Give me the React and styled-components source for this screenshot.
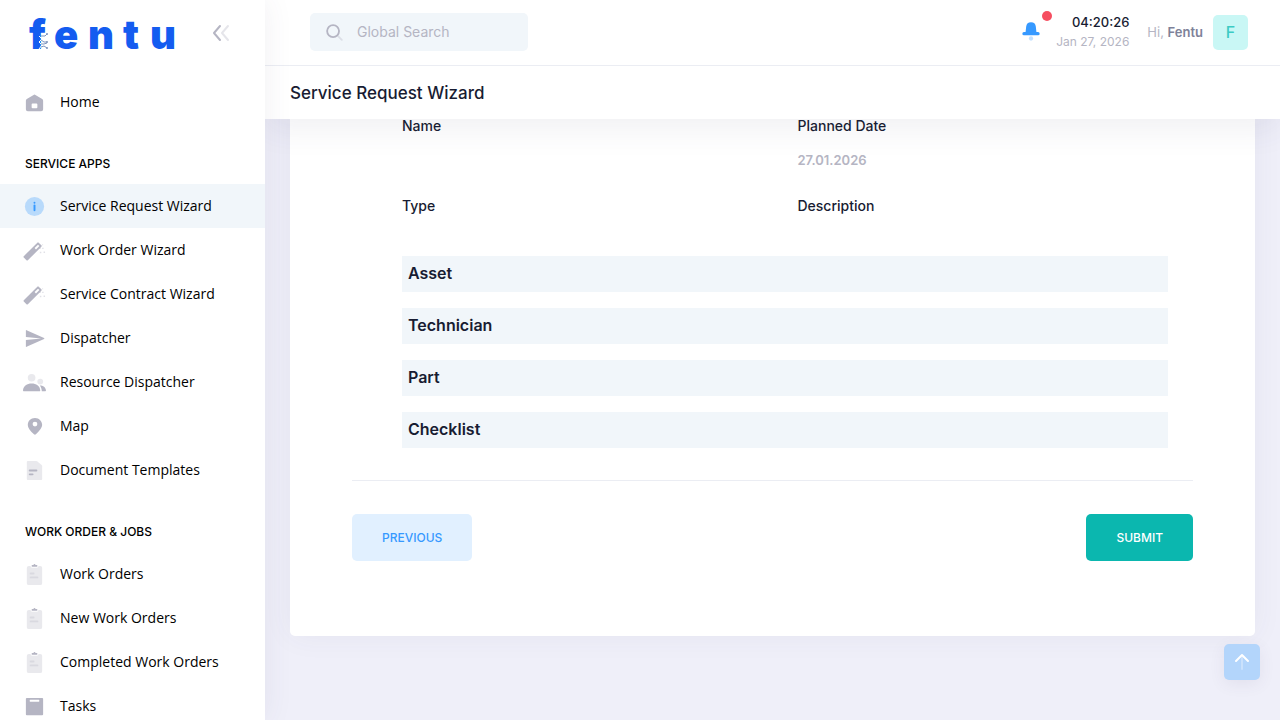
import React from "react";
import styled, { createGlobalStyle } from "styled-components";

const GlobalStyle = createGlobalStyle`
  *, *::before, *::after { box-sizing: border-box; }
  body {
    margin: 0;
    background: #efeff9;
    color: #181c32;
    font-family: Inter, "Open Sans", sans-serif;
    font-size: 14px;
  }
`;

const Shell = styled.div`
  display: flex;
  height: 100vh;
  overflow: hidden;
`;

const Sidebar = styled.aside`
  position: relative;
  z-index: 3;
  flex: 0 0 265px;
  background: #ffffff;
  box-shadow: 0 0 28px rgba(82, 63, 105, 0.08);
  overflow: hidden;
`;

const Brand = styled.div`
  display: flex;
  align-items: center;
  justify-content: space-between;
  height: 65px;
  padding: 0 32px 0 25px;
`;

const CollapseButton = styled.button`
  display: flex;
  padding: 0;
  border: 0;
  background: none;
  color: #b5b5c3;
`;

const Nav = styled.nav`
  padding-top: 15px;
`;

const NavSection = styled.h4`
  margin: 20px 0 0;
  padding: 0 25px;
  font-size: 12px;
  font-weight: 500;
  line-height: 40px;
  color: #000000;
`;

const NavLink = styled.a`
  display: flex;
  align-items: center;
  gap: 14px;
  height: 44px;
  padding: 0 23px;
  font-family: "Open Sans", sans-serif;
  font-size: 14px;
  line-height: 20px;
  color: #000000;
  text-decoration: none;
  white-space: nowrap;
  background: ${(p) => (p.$active ? "#f1f6fa" : "transparent")};

  svg {
    flex: none;
    color: ${(p) => (p.$active ? "#3699ff" : "#b5b5c3")};
  }
`;

const Main = styled.div`
  flex: 1;
  min-width: 0;
  display: flex;
  flex-direction: column;
`;

const Header = styled.header`
  position: relative;
  z-index: 2;
  background: #ffffff;
  box-shadow: 0 10px 30px rgba(62, 63, 105, 0.08);
`;

const Topbar = styled.div`
  display: flex;
  align-items: center;
  justify-content: space-between;
  height: 66px;
  padding: 0 32px 1px 45px;
  border-bottom: 1px solid #ebedf3;
`;

const SearchBox = styled.label`
  display: flex;
  align-items: center;
  gap: 12px;
  width: 218px;
  height: 38px;
  padding: 0 13px;
  border-radius: 5px;
  background: #f1f6fa;
  color: #b5b5c3;

  svg {
    flex: none;
  }
`;

const SearchInput = styled.input`
  width: 100%;
  min-width: 0;
  padding: 0;
  border: 0;
  outline: 0;
  background: none;
  font: 400 14px/20px Inter, "Open Sans", sans-serif;
  color: #3f4254;

  &::placeholder {
    color: #b5b5c3;
    opacity: 1;
  }
`;

const Tools = styled.div`
  display: flex;
  align-items: center;
`;

const BellButton = styled.button`
  position: relative;
  display: flex;
  margin-right: 12px;
  padding: 0;
  border: 0;
  background: none;
  color: #3699ff;
`;

const Badge = styled.span`
  position: absolute;
  top: -8px;
  right: -8px;
  width: 10px;
  height: 10px;
  border-radius: 50%;
  background: #f64e60;
`;

const Clock = styled.div`
  display: flex;
  flex-direction: column;
  margin-right: 18px;
  text-align: right;
  line-height: 19px;
`;

const Time = styled.span`
  font-size: 13px;
  font-weight: 500;
`;

const DateText = styled.span`
  font-size: 12px;
  color: #b5b5c3;
`;

const Greeting = styled.span`
  margin-right: 10px;
  font-size: 13px;
  color: #b5b5c3;

  strong {
    font-weight: 600;
    color: #7e8299;
  }
`;

const Avatar = styled.button`
  width: 35px;
  height: 35px;
  padding: 0;
  border: 0;
  border-radius: 5px;
  background: #c9f7f5;
  font: 500 16px/35px Inter, sans-serif;
  color: #3ccbc4;
`;

const PageTitle = styled.h1`
  margin: 0;
  padding: 1px 25px 0;
  font-size: 17px;
  font-weight: 500;
  line-height: 52px;
`;

const Content = styled.main`
  flex: 1;
  min-height: 0;
  padding: 0 25px;
`;

const Card = styled.section`
  margin-top: -23px;
  padding: 20px 62px 75px;
  border-radius: 5px;
  background: #ffffff;
  box-shadow: 0 0 30px rgba(62, 63, 105, 0.06);
`;

const Review = styled.div`
  padding: 0 25px 32px 50px;
`;

const Fields = styled.dl`
  display: grid;
  grid-template-columns: 1fr 1fr;
  grid-auto-rows: 60px;
  gap: 20px 25px;
  margin: 0;
`;

const Field = styled.div`
  display: flex;
  flex-direction: column;
  gap: 14px;
  font-size: 14px;
  line-height: 20px;

  dt {
    font-weight: 500;
  }

  dd {
    margin: 0;
    font-size: 13px;
    font-weight: 600;
    color: #b5b5c3;
  }
`;

const Sections = styled.div`
  display: grid;
  gap: 16px;
`;

const SectionBar = styled.h2`
  margin: 0;
  padding: 0 6px 2px;
  background: #f1f6fa;
  font-size: 16px;
  font-weight: 600;
  line-height: 34px;
`;

const Actions = styled.div`
  display: flex;
  justify-content: space-between;
  padding-top: 33px;
  border-top: 1px solid #ebedf3;
`;

const ActionButton = styled.button`
  height: 47px;
  padding: 0 30px;
  border: 0;
  border-radius: 5px;
  background: ${(p) => (p.$primary ? "#0bb7af" : "#e1f0ff")};
  font: 500 12px/20px Inter, sans-serif;
  color: ${(p) => (p.$primary ? "#ffffff" : "#3699ff")};
`;

const ScrollTop = styled.button`
  position: fixed;
  right: 20px;
  bottom: 40px;
  z-index: 4;
  display: flex;
  align-items: center;
  justify-content: center;
  width: 36px;
  height: 36px;
  padding: 0;
  border: 0;
  border-radius: 5px;
  background: #b3d5fb;
  box-shadow: 0 4px 16px rgba(82, 63, 105, 0.08);
  color: #ffffff;
`;

const shapes = {
  home: (
    <path
      fillRule="evenodd"
      d="M3.957 8.415 11.479 3.819a1 1 0 0 1 1.042 0L20.043 8.415A2 2 0 0 1 21 10.122V19a2 2 0 0 1-2 2H5a2 2 0 0 1-2-2V10.122a2 2 0 0 1 .957-1.707ZM10 13a1 1 0 0 0-1 1v3a1 1 0 0 0 1 1h4a1 1 0 0 0 1-1v-3a1 1 0 0 0-1-1Z"
    />
  ),
  info: (
    <>
      <circle cx="12" cy="12" r="10" opacity="0.3" />
      <rect x="11" y="10" width="2" height="7" rx="1" />
      <rect x="11" y="7" width="2" height="2" rx="1" />
    </>
  ),
  wand: (
    <>
      <path
        fillRule="evenodd"
        transform="rotate(-225 10 13)"
        d="M1 12v2h5v-2ZM0 10h20a1 1 0 0 1 1 1v4a1 1 0 0 1-1 1H0a1 1 0 0 1-1-1v-4a1 1 0 0 1 1-1Z"
      />
      <path
        opacity="0.4"
        d="M17 9h1.500v1.500H17ZM20 9h1.500v1.500H20ZM21.500 13H23v1.500h-1.500ZM17.600 13.300h1.500v1.500h-1.500ZM20 5.500h1v1h-1Z"
      />
    </>
  ),
  send: (
    <path d="M3 13.5 19 12 3 10.500V3.773a.5.5 0 0 1 .705-.456L21.987 11.544a.5.5 0 0 1 0 .912L3.705 20.683A.5.5 0 0 1 3 20.227Z" />
  ),
  users: (
    <>
      <circle cx="18" cy="11" r="3" opacity="0.3" />
      <circle cx="9" cy="7" r="4" opacity="0.3" />
      <path d="M17.601 15C21.008 15.038 23.789 16.760 23.998 20.400 24.007 20.547 23.998 21 23.456 21H19.600C19.600 18.749 18.856 16.672 17.601 15ZM0 20.199C.388 15.427 4.262 13 8.983 13 13.771 13 17.705 15.293 17.998 20.200 18.010 20.395 17.998 21 17.247 21H.728C.477 21-.020 20.459 0 20.199Z" />
    </>
  ),
  pin: (
    <path
      fillRule="evenodd"
      d="M5 10.500C5 6 8 3 12.500 3S20 6.750 20 10.500C20 12.833 17.824 16.036 13.471 20.109A1.500 1.500 0 0 1 11.477 20.159C7.159 16.508 5 13.288 5 10.500ZM12.500 12a2.500 2.500 0 1 0 0-5 2.500 2.500 0 0 0 0 5Z"
    />
  ),
  document: (
    <>
      <path
        opacity="0.3"
        d="M5.857 2H13.736a1.500 1.500 0 0 1 .969.355L19.469 6.384A1.500 1.500 0 0 1 20 7.529V20.083C20 21.874 19.980 22 18.143 22H5.857C4.020 22 4 21.874 4 20.083V3.917C4 2.126 4.020 2 5.857 2Z"
      />
      <rect x="6" y="11" width="9" height="2" rx="1" />
      <rect x="6" y="15" width="5" height="2" rx="1" />
    </>
  ),
  clipboard: (
    <>
      <path
        opacity="0.3"
        d="M8 3v.5A1.500 1.500 0 0 0 9.500 5h5A1.500 1.500 0 0 0 16 3.500V3h2a2 2 0 0 1 2 2v16a2 2 0 0 1-2 2H6a2 2 0 0 1-2-2V5a2 2 0 0 1 2-2Z"
      />
      <path d="M11 2a1 1 0 0 1 2 0h1.500a.5.5 0 0 1 .5.5v1a.5.5 0 0 1-.5.5h-5a.5.5 0 0 1-.5-.5v-1a.5.5 0 0 1 .5-.5Z" />
      <rect x="7" y="10" width="5" height="2" rx="1" opacity="0.3" />
      <rect x="7" y="14" width="9" height="2" rx="1" opacity="0.3" />
    </>
  ),
  tasks: (
    <path
      fillRule="evenodd"
      d="M4 3h16a1 1 0 0 1 1 1v16a1 1 0 0 1-1 1H4a1 1 0 0 1-1-1V4a1 1 0 0 1 1-1ZM7.500 5a.5.5 0 0 0-.5.5v1a.5.5 0 0 0 .5.5h9a.5.5 0 0 0 .5-.5v-1a.5.5 0 0 0-.5-.5Z"
    />
  ),
  bell: (
    <>
      <path d="M17 12h1.500a1.500 1.500 0 0 1 0 3h-13a1.500 1.500 0 0 1 0-3H7L7.558 6.976a4.469 4.469 0 0 1 8.884 0Z" />
      <rect x="10" y="16" width="4" height="4" rx="2" opacity="0.3" />
    </>
  ),
  search: (
    <g fill="none" stroke="currentColor" strokeWidth="2" strokeLinecap="round">
      <path d="m16.500 16.500 4 4" opacity="0.35" />
      <circle cx="11" cy="11" r="6.500" />
    </g>
  ),
  collapse: (
    <g fill="none" stroke="currentColor" strokeWidth="2" strokeLinecap="round" strokeLinejoin="round">
      <path d="M11 5 5 12l6 7" />
      <path d="m19 5-6 7 6 7" opacity="0.35" />
    </g>
  ),
  up: (
    <g fill="none" stroke="currentColor" strokeWidth="2" strokeLinecap="round" strokeLinejoin="round">
      <path d="M12 7v12" opacity="0.3" />
      <path d="m6 11 6-6 6 6" />
    </g>
  ),
};

function Icon({ name, size = 23 }) {
  return (
    <svg width={size} height={size} viewBox="0 0 24 24" fill="currentColor" aria-hidden="true">
      {shapes[name]}
    </svg>
  );
}

const LogoMark = styled.svg`
  flex: none;
  overflow: visible;
`;

function Logo() {
  return (
    <LogoMark width="160" height="64" viewBox="0 -8 160 64" role="img" aria-label="fentu">
      <text
        x="4 29 63 98 125"
        y="40"
        fill="#145cf0"
        fontFamily="Inter, sans-serif"
        fontSize="40"
        fontWeight="900"
      >
        fentu
      </text>
      <path d="M14 27l3 3-3 3 3 3-3 4" stroke="#ffffff" fill="none" />
      <path
        d="M16 27h4l2-2M16 31l3 2h3M16 35h3l3-1M16 38l3-1 3 2"
        stroke="#7c93bd"
        fill="none"
      />
      <g fill="#7c93bd">
        <circle cx="22" cy="25" r="1" />
        <circle cx="22" cy="33" r="1" />
        <circle cx="22" cy="39" r="1" />
      </g>
    </LogoMark>
  );
}

const serviceApps = [
  ["info", "Service Request Wizard"],
  ["wand", "Work Order Wizard"],
  ["wand", "Service Contract Wizard"],
  ["send", "Dispatcher"],
  ["users", "Resource Dispatcher"],
  ["pin", "Map"],
  ["document", "Document Templates"],
];

const workOrders = [
  ["clipboard", "Work Orders"],
  ["clipboard", "New Work Orders"],
  ["clipboard", "Completed Work Orders"],
  ["tasks", "Tasks"],
];

function NavItem({ icon, label, active }) {
  return (
    <NavLink href="#" $active={active} aria-current={active ? "page" : undefined}>
      <Icon name={icon} />
      {label}
    </NavLink>
  );
}

export default function App() {
  return (
    <>
      <GlobalStyle />
      <Shell>
        <Sidebar>
          <Brand>
            <Logo />
            <CollapseButton type="button" aria-label="Collapse menu">
              <Icon name="collapse" size={24} />
            </CollapseButton>
          </Brand>
          <Nav>
            <NavItem icon="home" label="Home" />
            <NavSection>SERVICE APPS</NavSection>
            {serviceApps.map(([icon, label], i) => (
              <NavItem key={label} icon={icon} label={label} active={i === 0} />
            ))}
            <NavSection>WORK ORDER &amp; JOBS</NavSection>
            {workOrders.map(([icon, label]) => (
              <NavItem key={label} icon={icon} label={label} />
            ))}
          </Nav>
        </Sidebar>
        <Main>
          <Header>
            <Topbar>
              <SearchBox>
                <Icon name="search" size={22} />
                <SearchInput type="text" placeholder="Global Search" aria-label="Global Search" />
              </SearchBox>
              <Tools>
                <BellButton type="button" aria-label="Notifications">
                  <Icon name="bell" size={26} />
                  <Badge />
                </BellButton>
                <Clock>
                  <Time>04:20:26</Time>
                  <DateText>Jan 27, 2026</DateText>
                </Clock>
                <Greeting>
                  Hi, <strong>Fentu</strong>
                </Greeting>
                <Avatar type="button">F</Avatar>
              </Tools>
            </Topbar>
            <PageTitle>Service Request Wizard</PageTitle>
          </Header>
          <Content>
            <Card>
              <Review>
                <Fields>
                  <Field>
                    <dt>Name</dt>
                  </Field>
                  <Field>
                    <dt>Planned Date</dt>
                    <dd>27.01.2026</dd>
                  </Field>
                  <Field>
                    <dt>Type</dt>
                  </Field>
                  <Field>
                    <dt>Description</dt>
                  </Field>
                </Fields>
                <Sections>
                  {["Asset", "Technician", "Part", "Checklist"].map((title) => (
                    <SectionBar key={title}>{title}</SectionBar>
                  ))}
                </Sections>
              </Review>
              <Actions>
                <ActionButton type="button">PREVIOUS</ActionButton>
                <ActionButton type="submit" $primary>
                  SUBMIT
                </ActionButton>
              </Actions>
            </Card>
          </Content>
        </Main>
      </Shell>
      <ScrollTop type="button" aria-label="Scroll to top">
        <Icon name="up" size={24} />
      </ScrollTop>
    </>
  );
}
